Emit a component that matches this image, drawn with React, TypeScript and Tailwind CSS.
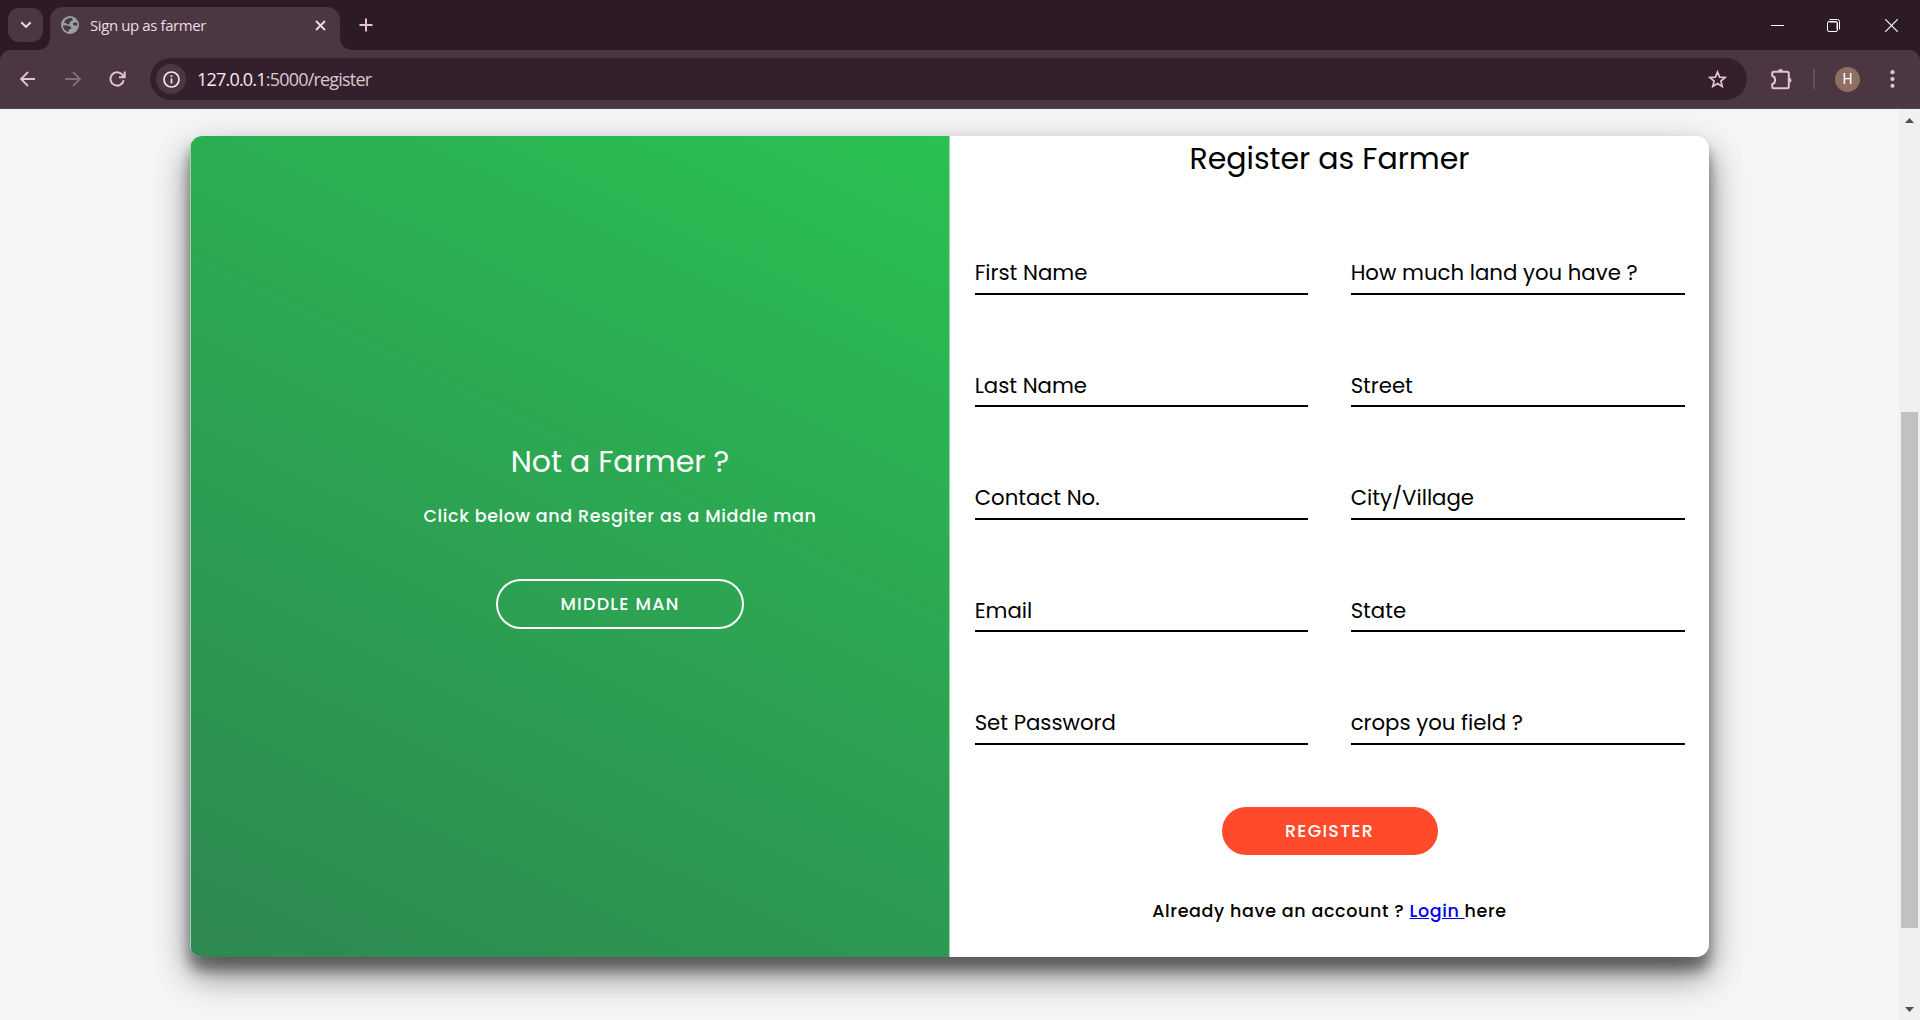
import type { ReactNode } from "react";

const poppins = "font-[Poppins,Inter,sans-serif]";

function TabBar() {
  return (
    <div className="relative flex h-[50px] shrink-0 bg-[#2c1b26] text-[#ecdde4]">
      <button className="ml-2 mt-2 flex h-[34px] w-[35px] items-center justify-center rounded-[11px] bg-[#4b3742]">
        <svg width="12" height="8" viewBox="0 0 12 8" fill="none" stroke="currentColor" strokeWidth="2"><path d="M1.3 1.2 6 5.9 10.7 1.2" /></svg>
      </button>
      <div className="relative ml-[7px] mt-[7px] flex h-[43px] w-[290px] items-center rounded-t-[13px] bg-[#4b3742] pb-[7px] pl-[11px]">
        <svg className="absolute -left-[13px] bottom-0" width="13" height="13" viewBox="0 0 13 13" fill="#4b3742"><path d="M13 0v13H0C8 13 13 8 13 0Z" /></svg>
        <svg className="absolute -right-[13px] bottom-0" width="13" height="13" viewBox="0 0 13 13" fill="#4b3742"><path d="M0 0v13h13C5 13 0 8 0 0Z" /></svg>
        <svg width="18" height="18" viewBox="0 0 18 18">
          <circle cx="9" cy="9" r="9" fill="#9aa0a6" />
          <path d="M9.8 1.8c-3 .1-5.7 1.9-6.9 4.5l3.7 1.9c.8.5 1.7.3 2-.4.4-.8-.3-1.3.4-2 .7-.8 2-.5 2.7-1.5.4-.8-.2-1.9-1.9-2.5ZM1.8 9.5c.3 3.2 2.6 5.8 5.6 6.6l.3-1.9c.1-1 .9-1 1.7-1.3 1-.3 1-1.3.5-2-.5-.9-1.6-.6-2.5-.9-1.2-.3-1.8-.9-2.9-.8-.8.1-1.7.5-2.7.3ZM15.6 6.2c-1 .5-2.3.2-3.1.8-.9.6-.7 1.9.3 2.3.9.4 2.1-.1 3.4.5.2-1.2 0-2.5-.6-3.6Z" fill="#4b3742" />
        </svg>
        <span className="ml-[11px] whitespace-nowrap font-['Open_Sans'] text-[15px] tracking-[-0.4px]">Sign up as farmer</span>
        <svg className="ml-auto mr-[14.5px]" width="11" height="11" viewBox="0 0 11 11" stroke="currentColor" strokeWidth="1.8"><path d="m1 1 9 9M10 1l-9 9" /></svg>
      </div>
      <svg className="ml-[19px] mt-[18px]" width="14" height="14" viewBox="0 0 14 14" stroke="#e3c3d3" strokeWidth="2"><path d="M7 .5v13M.5 7h13" /></svg>
      <div className="ml-auto mr-[22px] flex items-center text-white">
        <svg width="13" height="13" viewBox="0 0 13 13" stroke="currentColor"><path d="M0 6.5h13" /></svg>
        <svg className="ml-[43px]" width="13" height="13" viewBox="0 0 13 13" fill="none" stroke="currentColor"><rect x=".5" y="2.5" width="10" height="10" rx="1.5" /><path d="M2.5 3.5h7v7" strokeOpacity=".5" /><path d="M2.5.5h8a2 2 0 0 1 2 2v8" /></svg>
        <svg className="ml-[45px]" width="13" height="13" viewBox="0 0 13 13" stroke="currentColor" strokeWidth="1.2"><path d="m.3.3 12.4 12.4M12.7.3.3 12.7" /></svg>
      </div>
    </div>
  );
}

function Toolbar() {
  return (
    <div className="shrink-0 bg-[#2c1b26]">
      <div className="flex h-[59px] items-center rounded-t-[11px] border-b border-[#5a4650] bg-[#4b3742] text-[#e3c3d3]">
        <svg className="ml-5" width="16" height="16" viewBox="0 0 16 16" fill="none" stroke="currentColor" strokeWidth="1.8"><path d="M15 8H1.5M8 1 1 8l7 7" /></svg>
        <svg className="ml-[29px] text-[#866c79]" width="16" height="16" viewBox="0 0 16 16" fill="none" stroke="currentColor" strokeWidth="1.8"><path d="M0 8h14.5M8 1l7 7-7 7" /></svg>
        <svg className="ml-[28px]" width="17" height="16" viewBox="0 0 17 16" fill="none" stroke="currentColor" strokeWidth="2"><path d="M14.7 9.3a6.7 6.7 0 1 1-1.4-5.7L15.3 6M15.7.5v5.7H10" /></svg>
        <div className="ml-[24px] flex h-[42px] w-[1597px] items-center rounded-full bg-[#33202c] pl-[6px] pr-[20px]">
          <span className="flex size-[30px] items-center justify-center rounded-full bg-[#4b3742] text-[#f3e6ec]">
            <svg width="17" height="17" viewBox="0 0 17 17" fill="none" stroke="currentColor" strokeWidth="1.7"><circle cx="8.5" cy="8.5" r="7.5" /><path d="M8.5 7.5v5M8.5 4.3V6" /></svg>
          </span>
          <span className="ml-[11px] font-['Open_Sans'] text-[18px] tracking-[-0.8px] text-[#d8c8d0]"><span className="text-[#f5eaf0]">127.0.0.1</span>:5000/register</span>
          <svg className="ml-auto" width="19" height="19" viewBox="0 0 19 19" fill="none" stroke="currentColor" strokeWidth="1.7"><path d="m9.5 2 2.1 5.1 5.5.4-4.2 3.5 1.3 5.4-4.7-2.9-4.7 2.9 1.3-5.4-4.2-3.5 5.5-.4Z" /></svg>
        </div>
        <svg className="ml-[24px]" width="21" height="21" viewBox="0 0 21 21" fill="none" stroke="currentColor" strokeWidth="2"><path d="M1.2 6.7V4.2c0-1 .5-1.5 1.500-1.500h13.600c1 0 1.500.5 1.500 1.500v13.600c0 1-.5 1.500-1.500 1.500H2.700c-1 0-1.500-.5-1.500-1.500v-2.500c2-.6 2.900-2.200 2.900-4.300S3.200 7.300 1.200 6.700Z" /><path d="M7 2.3a2.5 2.3 0 0 1 5 0ZM18.2 8.800a2.3 2.5 0 0 1 0 5Z" fill="currentColor" stroke="none" /></svg>
        <span className="ml-[21px] h-5 w-[2px] bg-[#664f5c]" />
        <span className="ml-[20px] flex size-[25px] items-center justify-center rounded-full bg-[#8f6e63] font-['Roboto'] text-[14px] text-white">H</span>
        <svg className="ml-[30px]" width="5" height="18" viewBox="0 0 5 18" fill="currentColor"><circle cx="2.5" cy="2.2" r="2.1" /><circle cx="2.5" cy="9" r="2.1" /><circle cx="2.5" cy="15.8" r="2.1" /></svg>
      </div>
    </div>
  );
}

function Field({ children }: { children: ReactNode }) {
  return <div className="flex h-[112.5px] items-end border-b-2 border-black pb-[6.5px] text-[21.25px] leading-[27px]">{children}</div>;
}

export default function App() {
  return (
    <div className="flex h-[1020px] w-[1920px] flex-col overflow-hidden bg-[#f5f5f7]">
      <TabBar />
      <Toolbar />
      <div className="flex min-h-0 flex-1">
        <main className={`flex-1 pl-[190px] pt-[27px] text-black ${poppins}`}>
          <div className="flex h-[821px] w-[1519px] overflow-hidden rounded-[12.5px] bg-white shadow-[0_17.5px_35px_rgba(0,0,0,.25),0_12.5px_12.5px_rgba(0,0,0,.22),0_17.5px_35px_rgba(0,0,0,.25),0_12.5px_12.5px_rgba(0,0,0,.22)]">
            <section className="flex w-[760px] flex-col items-center border-x border-[#95d9aa] bg-linear-[26deg,#2e8852,#2ac052] pl-[100px] pt-[303px] text-white">
              <h1 className="whitespace-nowrap text-[30px] leading-[45px]">Not a Farmer ?</h1>
              <p className="mt-[20px] whitespace-nowrap text-[17.5px] font-medium leading-[25px] tracking-[0.625px]">Click below and Resgiter as a Middle man</p>
              <button className="mt-[50px] h-[50px] w-[248px] rounded-full border-2 border-white pt-px text-[17.5px] font-medium leading-[25px] tracking-[1.25px]">MIDDLE MAN</button>
            </section>
            <section className="flex flex-1 flex-col items-center">
              <h1 className="whitespace-nowrap text-[30px] leading-[45px]">Register as Farmer</h1>
              <div className="ml-[0.25px] mt-[1.25px] grid w-[710px] grid-cols-[333px_334px] justify-between">
                <Field>First Name</Field>
                <Field>How much land you have ?</Field>
                <Field>Last Name</Field>
                <Field>Street</Field>
                <Field>Contact No.</Field>
                <Field>City/Village</Field>
                <Field>Email</Field>
                <Field>State</Field>
                <Field>Set Password</Field>
                <Field>crops you field ?</Field>
              </div>
              <button className="mt-[62.25px] h-[48px] w-[216px] rounded-full bg-[#ff4b2b] pt-px text-[17.5px] font-medium leading-[25px] tracking-[1.25px] text-white">REGISTER</button>
              <p className="mt-[44px] whitespace-pre text-[17.5px] font-medium leading-[25px] tracking-[0.625px]">Already have an account ? <a className="text-[#0000ee] underline">Login </a>here</p>
            </section>
          </div>
        </main>
        <aside className="flex w-[21px] flex-col items-center bg-[#f0f0f0] text-[#505050]">
          <svg className="mt-[9px]" width="9" height="5" viewBox="0 0 9 5" fill="currentColor"><path d="M4.5 0 9 5H0Z" /></svg>
          <div className="mt-[289px] h-[516px] w-[17px] bg-[#c1c1c1]" />
          <svg className="mt-[79px]" width="9" height="5" viewBox="0 0 9 5" fill="currentColor"><path d="M0 0h9L4.5 5Z" /></svg>
        </aside>
      </div>
    </div>
  );
}
